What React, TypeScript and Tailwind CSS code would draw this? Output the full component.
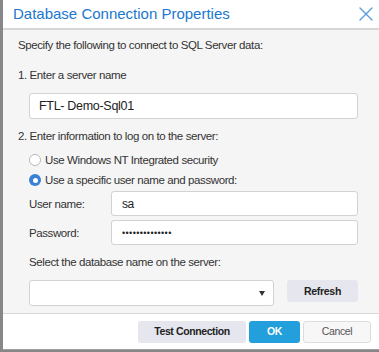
import { X } from "lucide-react";

const Radio = ({ checked }: { checked?: boolean }) =>
  checked ? (
    <span className="flex size-[12px] items-center justify-center rounded-full bg-[#3a80d6]">
      <span className="size-[5px] rounded-full bg-white" />
    </span>
  ) : (
    <span className="size-[12px] rounded-full border border-[#b8b8b8] bg-white" />
  );

const Field = ({ value, className = "" }: { value: string; className?: string }) => (
  <div
    className={`flex items-center rounded-[3px] border border-[#d2d2d2] bg-white pl-[9px] text-[#222] ${className}`}
  >
    {value}
  </div>
);

const App = () => (
  <div className="h-[352px] w-[379px] bg-[#858789] pl-[3px] font-['Liberation_Sans',Arial,sans-serif]">
    <div className="flex h-[350px] flex-col border-b border-[#a0a0a0] bg-white">
      <div className="flex h-[30px] shrink-0 items-center justify-between border-b-2 border-[#d6d6d6] pr-[1px] pl-[10px]">
        <span className="text-[15px] leading-[18px] text-[#2077d0]">Database Connection Properties</span>
        <X className="size-[24px] text-[#5b9be0]" strokeWidth={1.4} />
      </div>
      <div className="flex flex-1 flex-col border-b border-[#d6d6d6] bg-[#f5f5f5] pr-[21px] pl-[15px] text-[11.5px] leading-[14px] tracking-[-0.4px] text-[#333]">
        <p className="mt-[8px]">Specify the following to connect to SQL Server data:</p>
        <p className="mt-[16px]">1. Enter a server name</p>
        <Field value="FTL- Demo-Sql01" className="mt-[11px] ml-[11px] h-[26px] text-[12.5px] tracking-[-0.3px]" />
        <p className="mt-[10px]">2. Enter information to log on to the server:</p>
        <div className="mt-[10px] ml-[11px] flex flex-col gap-[6px]">
          <label className="flex items-center gap-[4px]">
            <Radio />
            Use Windows NT Integrated security
          </label>
          <label className="flex items-center gap-[4px]">
            <Radio checked />
            Use a specific user name and password:
          </label>
        </div>
        <div className="mt-[4px] ml-[11px] flex flex-col gap-[4px]">
          <div className="flex items-center">
            <span className="w-[82px]">User name:</span>
            <Field value="sa" className="h-[25px] flex-1 pl-[10px] text-[12px]" />
          </div>
          <div className="flex items-center">
            <span className="w-[82px]">Password:</span>
            <Field value="••••••••••••••" className="h-[25px] flex-1 pl-[10px] text-[9px] tracking-[0.4px]" />
          </div>
        </div>
        <p className="mt-[10px] ml-[11px]">Select the database name on the server:</p>
        <div className="mt-[11px] ml-[11px] flex items-start gap-[13px]">
          <div className="flex h-[26px] flex-1 items-center justify-end rounded-[3px] border border-[#d2d2d2] bg-white pr-[8px]">
            <svg width="6" height="5" viewBox="0 0 6 5">
              <path d="M0 0h6L3 5z" fill="#333" />
            </svg>
          </div>
          <button className="h-[22px] w-[71px] rounded-[3px] bg-[#e6e6ee] text-[10.5px] font-bold tracking-[-0.3px] text-[#222]">
            Refresh
          </button>
        </div>
      </div>
      <div className="flex h-[35px] shrink-0 items-center justify-end gap-[3px] pr-[8px] text-[10.5px] tracking-[-0.4px]">
        <button className="h-[22px] w-[108px] rounded-[3px] bg-[#e6e6ee] font-bold text-[#222]">
          Test Connection
        </button>
        <button className="h-[22px] w-[51px] rounded-[3px] bg-[#239fdb] font-bold text-white">
          OK
        </button>
        <button className="h-[22px] w-[68px] rounded-[3px] border border-[#dcdcdc] bg-[#f7f7f7] text-[#555]">
          Cancel
        </button>
      </div>
    </div>
  </div>
);

export default App;
